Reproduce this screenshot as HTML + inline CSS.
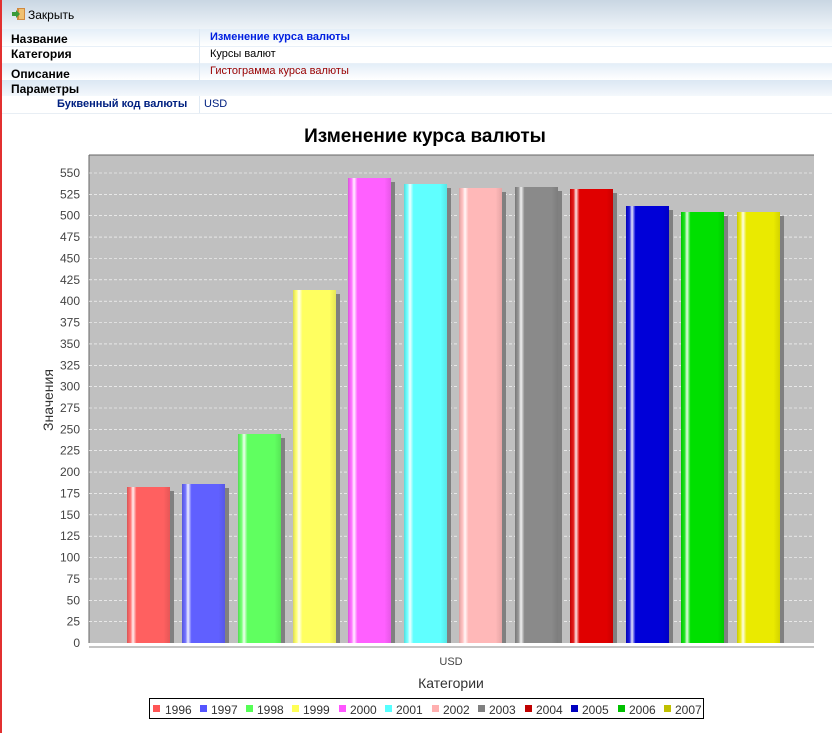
<!DOCTYPE html>
<html><head><meta charset="utf-8"><style>
body{margin:0;width:832px;height:733px;overflow:hidden;background:#fff;font-family:"Liberation Sans",sans-serif;position:relative}
.lb{position:absolute;left:0;top:0;width:2px;height:733px;background:#e23030}
.tb{position:absolute;left:2px;top:0;width:830px;height:29px;background:linear-gradient(#c9d6e3,#dfe8f0 60%,#eef3f8)}
.tb span{position:absolute;left:26px;top:8px;font-size:12px;color:#000}
.ic{position:absolute;left:10px;top:7px;width:14px;height:14px}
.row{position:absolute;left:2px;width:830px;font-size:11px}
.k{position:absolute;left:9px;font-weight:bold;color:#000;font-size:12px}
.v{position:absolute;left:208px}
</style></head><body>
<div class="lb"></div>
<div class="tb"><svg class="ic" viewBox="0 0 14 14"><rect x="5" y="1" width="8" height="12" fill="#d08a40"/><rect x="7" y="2" width="5" height="10" fill="#f0c070"/><path d="M0 5h4V3l4 4-4 4V9H0z" fill="#3a9a3a"/></svg><span>Закрыть</span></div>
<div class="row" style="top:29px;height:17px;background:linear-gradient(#e4eef8,#fff);border-bottom:1px solid #e8f0f8"><span class="k" style="top:3px">Название</span><span class="v" style="top:2px;color:#0020e0;font-weight:bold">Изменение курса валюты</span></div>
<div class="row" style="top:47px;height:16px;border-bottom:1px solid #e8f0f8"><span class="k" style="top:0">Категория</span><span class="v" style="top:1px">Курсы валют</span></div>
<div class="row" style="top:64px;height:16px;background:linear-gradient(#e4eef8,#fff)"><span class="k" style="top:3px">Описание</span><span class="v" style="top:1px;color:#900">Гистограмма курса валюты</span></div>
<div class="row" style="top:80px;height:16px;background:linear-gradient(#dbe7f3,#f4f8fc)"><span class="k" style="top:2px">Параметры</span></div>
<div class="row" style="top:96px;height:17px;border-bottom:1px solid #e8eef4"><span style="position:absolute;left:55px;top:2px;font-weight:bold;color:#002080;font-size:11px">Буквенный код валюты</span><span class="v" style="left:202px;top:2px;color:#002080">USD</span></div>
<div style="position:absolute;left:199px;top:29px;width:1px;height:51px;background:#e0eaf4"></div>
<div style="position:absolute;left:199px;top:96px;width:1px;height:17px;background:#e0eaf4"></div>
<svg width="832" height="733" style="position:absolute;left:0;top:0" font-family="Liberation Sans,sans-serif">
<defs>
<linearGradient id="g" x1="0" x2="1"><stop offset="0" stop-color="#000" stop-opacity=".15"/><stop offset=".08" stop-color="#fff" stop-opacity=".1"/><stop offset=".14" stop-color="#fff" stop-opacity=".9"/><stop offset=".22" stop-color="#fff" stop-opacity="0"/><stop offset=".85" stop-color="#000" stop-opacity="0"/><stop offset="1" stop-color="#000" stop-opacity=".1"/></linearGradient>
</defs>
<text x="425" y="142" text-anchor="middle" font-size="19" font-weight="bold">Изменение курса валюты</text>
<rect x="89" y="155" width="725" height="488" fill="#c0c0c0"/>
<line x1="89" y1="155" x2="814" y2="155" stroke="#666"/>
<line x1="89" y1="155" x2="89" y2="643" stroke="#666"/>
<g stroke="#fff" stroke-dasharray="3,2" stroke-width="0.6">
<line x1="89" x2="814" y1="621.6" y2="621.6"/><line x1="89" x2="814" y1="600.3" y2="600.3"/><line x1="89" x2="814" y1="578.9" y2="578.9"/><line x1="89" x2="814" y1="557.5" y2="557.5"/><line x1="89" x2="814" y1="536.2" y2="536.2"/><line x1="89" x2="814" y1="514.8" y2="514.8"/><line x1="89" x2="814" y1="493.4" y2="493.4"/><line x1="89" x2="814" y1="472.1" y2="472.1"/><line x1="89" x2="814" y1="450.7" y2="450.7"/><line x1="89" x2="814" y1="429.4" y2="429.4"/><line x1="89" x2="814" y1="408" y2="408"/><line x1="89" x2="814" y1="386.6" y2="386.6"/><line x1="89" x2="814" y1="365.3" y2="365.3"/><line x1="89" x2="814" y1="343.9" y2="343.9"/><line x1="89" x2="814" y1="322.5" y2="322.5"/><line x1="89" x2="814" y1="301.2" y2="301.2"/><line x1="89" x2="814" y1="279.8" y2="279.8"/><line x1="89" x2="814" y1="258.5" y2="258.5"/><line x1="89" x2="814" y1="237.1" y2="237.1"/><line x1="89" x2="814" y1="215.7" y2="215.7"/><line x1="89" x2="814" y1="194.4" y2="194.4"/><line x1="89" x2="814" y1="173" y2="173"/>
</g>
<g font-size="12" fill="#444" text-anchor="end">
<text x="80" y="647">0</text><text x="80" y="625.6">25</text><text x="80" y="604.3">50</text><text x="80" y="582.9">75</text><text x="80" y="561.5">100</text><text x="80" y="540.2">125</text><text x="80" y="518.8">150</text><text x="80" y="497.4">175</text><text x="80" y="476.1">200</text><text x="80" y="454.7">225</text><text x="80" y="433.4">250</text><text x="80" y="412">275</text><text x="80" y="390.6">300</text><text x="80" y="369.3">325</text><text x="80" y="347.9">350</text><text x="80" y="326.5">375</text><text x="80" y="305.2">400</text><text x="80" y="283.8">425</text><text x="80" y="262.5">450</text><text x="80" y="241.1">475</text><text x="80" y="219.7">500</text><text x="80" y="198.4">525</text><text x="80" y="177">550</text>
</g>
<text transform="translate(53,400) rotate(-90)" text-anchor="middle" font-size="14" fill="#333">Значения</text>
<g fill="#808080">
<rect x="131" y="491" width="43" height="152"/><rect x="186" y="488" width="43" height="155"/><rect x="242" y="438" width="43" height="205"/><rect x="297" y="294" width="43" height="349"/><rect x="352" y="182" width="43" height="461"/><rect x="408" y="188" width="43" height="455"/><rect x="463" y="192" width="43" height="451"/><rect x="519" y="191" width="43" height="452"/><rect x="574" y="193" width="43" height="450"/><rect x="630" y="210" width="43" height="433"/><rect x="685" y="216" width="43" height="427"/><rect x="741" y="216" width="43" height="427"/>
</g>
<rect x="127" y="487" width="43" height="156" fill="#ff6060"/><rect x="127" y="487" width="43" height="156" fill="url(#g)"/>
<rect x="182" y="484" width="43" height="159" fill="#6060ff"/><rect x="182" y="484" width="43" height="159" fill="url(#g)"/>
<rect x="238" y="434" width="43" height="209" fill="#60ff60"/><rect x="238" y="434" width="43" height="209" fill="url(#g)"/>
<rect x="293" y="290" width="43" height="353" fill="#ffff60"/><rect x="293" y="290" width="43" height="353" fill="url(#g)"/>
<rect x="348" y="178" width="43" height="465" fill="#ff60ff"/><rect x="348" y="178" width="43" height="465" fill="url(#g)"/>
<rect x="404" y="184" width="43" height="459" fill="#60ffff"/><rect x="404" y="184" width="43" height="459" fill="url(#g)"/>
<rect x="459" y="188" width="43" height="455" fill="#ffb8b8"/><rect x="459" y="188" width="43" height="455" fill="url(#g)"/>
<rect x="515" y="187" width="43" height="456" fill="#8a8a8a"/><rect x="515" y="187" width="43" height="456" fill="url(#g)"/>
<rect x="570" y="189" width="43" height="454" fill="#e00000"/><rect x="570" y="189" width="43" height="454" fill="url(#g)"/>
<rect x="626" y="206" width="43" height="437" fill="#0000d8"/><rect x="626" y="206" width="43" height="437" fill="url(#g)"/>
<rect x="681" y="212" width="43" height="431" fill="#00e000"/><rect x="681" y="212" width="43" height="431" fill="url(#g)"/>
<rect x="737" y="212" width="43" height="431" fill="#eaea00"/><rect x="737" y="212" width="43" height="431" fill="url(#g)"/>
<line x1="89" y1="647" x2="814" y2="647" stroke="#888"/>
<text x="451" y="665" text-anchor="middle" font-size="11" fill="#444">USD</text>
<text x="451" y="688" text-anchor="middle" font-size="14" fill="#333">Категории</text>
<rect x="149.5" y="698.5" width="554" height="20" fill="#fff" stroke="#000"/>
<g font-size="12" fill="#333">
<rect x="153" y="705" width="7" height="7" fill="#ff5555"/><text x="165" y="714">1996</text>
<rect x="200" y="705" width="7" height="7" fill="#5555ff"/><text x="211" y="714">1997</text>
<rect x="246" y="705" width="7" height="7" fill="#55ff55"/><text x="257" y="714">1998</text>
<rect x="292" y="705" width="7" height="7" fill="#ffff55"/><text x="303" y="714">1999</text>
<rect x="339" y="705" width="7" height="7" fill="#ff55ff"/><text x="350" y="714">2000</text>
<rect x="385" y="705" width="7" height="7" fill="#55ffff"/><text x="396" y="714">2001</text>
<rect x="432" y="705" width="7" height="7" fill="#ffafaf"/><text x="443" y="714">2002</text>
<rect x="478" y="705" width="7" height="7" fill="#808080"/><text x="489" y="714">2003</text>
<rect x="525" y="705" width="7" height="7" fill="#c00000"/><text x="536" y="714">2004</text>
<rect x="571" y="705" width="7" height="7" fill="#0000c0"/><text x="582" y="714">2005</text>
<rect x="618" y="705" width="7" height="7" fill="#00c000"/><text x="629" y="714">2006</text>
<rect x="664" y="705" width="7" height="7" fill="#c0c000"/><text x="675" y="714">2007</text>
</g>
</svg>
</body></html>
